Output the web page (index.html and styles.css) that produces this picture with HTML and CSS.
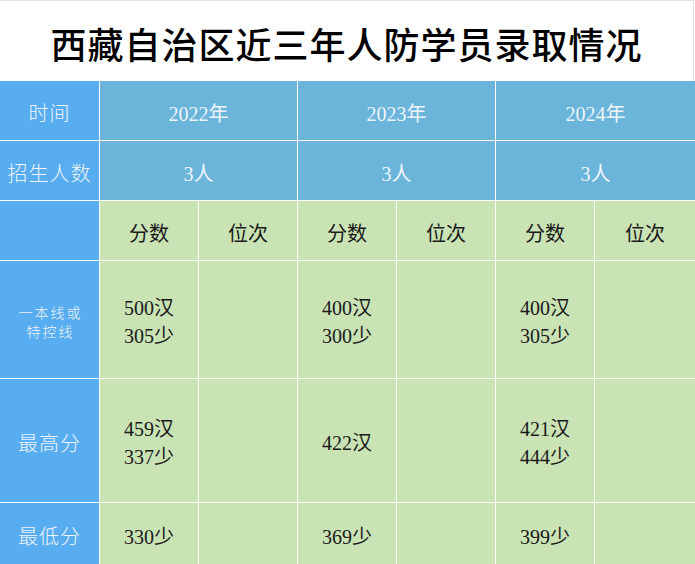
FILE: index.html
```html
<!DOCTYPE html>
<html lang="zh-CN">
<head>
<meta charset="utf-8">
<title>西藏自治区近三年人防学员录取情况</title>
<link rel="stylesheet" href="styles.css">
</head>
<body>
<div class="page">
  <div class="title">西藏自治区近三年人防学员录取情况</div>
  <div class="table">
    <div class="cell side">时间</div>
    <div class="cell head span2">2022年</div>
    <div class="cell head span2">2023年</div>
    <div class="cell head span2">2024年</div>

    <div class="cell side">招生人数</div>
    <div class="cell head span2">3人</div>
    <div class="cell head span2">3人</div>
    <div class="cell head span2">3人</div>

    <div class="cell side"></div>
    <div class="cell data">分数</div>
    <div class="cell data">位次</div>
    <div class="cell data">分数</div>
    <div class="cell data">位次</div>
    <div class="cell data">分数</div>
    <div class="cell data">位次</div>

    <div class="cell side small">一本线或<br>特控线</div>
    <div class="cell data multi">500汉<br>305少</div>
    <div class="cell data"></div>
    <div class="cell data multi">400汉<br>300少</div>
    <div class="cell data"></div>
    <div class="cell data multi">400汉<br>305少</div>
    <div class="cell data"></div>

    <div class="cell side">最高分</div>
    <div class="cell data multi">459汉<br>337少</div>
    <div class="cell data"></div>
    <div class="cell data multi">422汉</div>
    <div class="cell data"></div>
    <div class="cell data multi">421汉<br>444少</div>
    <div class="cell data"></div>

    <div class="cell side">最低分</div>
    <div class="cell data">330少</div>
    <div class="cell data"></div>
    <div class="cell data">369少</div>
    <div class="cell data"></div>
    <div class="cell data">399少</div>
    <div class="cell data"></div>
  </div>
</div>
</body>
</html>
```
FILE: styles.css
```css
html, body {
  margin: 0;
  padding: 0;
  background: #ffffff;
}
body {
  width: 695px;
  height: 564px;
  overflow: hidden;
  font-family: "Liberation Serif", "Noto Sans CJK SC", serif;
}
.page {
  display: flex;
  flex-direction: column;
  height: 564px;
}
.title {
  height: 81px;
  flex: none;
  box-sizing: border-box;
  border-top: 1px solid #e3e3e3;
  border-right: 1px solid #e3e3e3;
  margin-right: 1px;
  display: flex;
  align-items: center;
  justify-content: center;
  padding-top: 4px;
  font-family: "Noto Sans CJK SC", sans-serif;
  font-size: 36px;
  font-weight: 500;
  letter-spacing: 1px;
  color: #000000;
}
.table {
  flex: 1;
  display: grid;
  grid-template-columns: 99px repeat(5, 98px) 1fr;
  grid-template-rows: 59px 59px 59px 117px 123px 1fr;
  gap: 1px;
  background: #ffffff;
}
.cell {
  display: flex;
  align-items: center;
  justify-content: center;
  text-align: center;
  font-size: 20px;
  padding-top: 4px;
  box-sizing: border-box;
}
.span2 { grid-column: span 2; }
.side {
  background: #57adef;
  color: #eef4fb;
  font-family: "Noto Sans CJK SC", sans-serif;
  letter-spacing: 1px;
  font-weight: 300;
}
.side.small {
  font-size: 14px;
  line-height: 19px;
  letter-spacing: 2px;
  padding-left: 2px;
}
.head {
  background: #6bb5da;
  color: #eef4fb;
}
.data {
  background: #c9e3b5;
  color: #1a1a1a;
}
.multi {
  line-height: 28px;
}
```
